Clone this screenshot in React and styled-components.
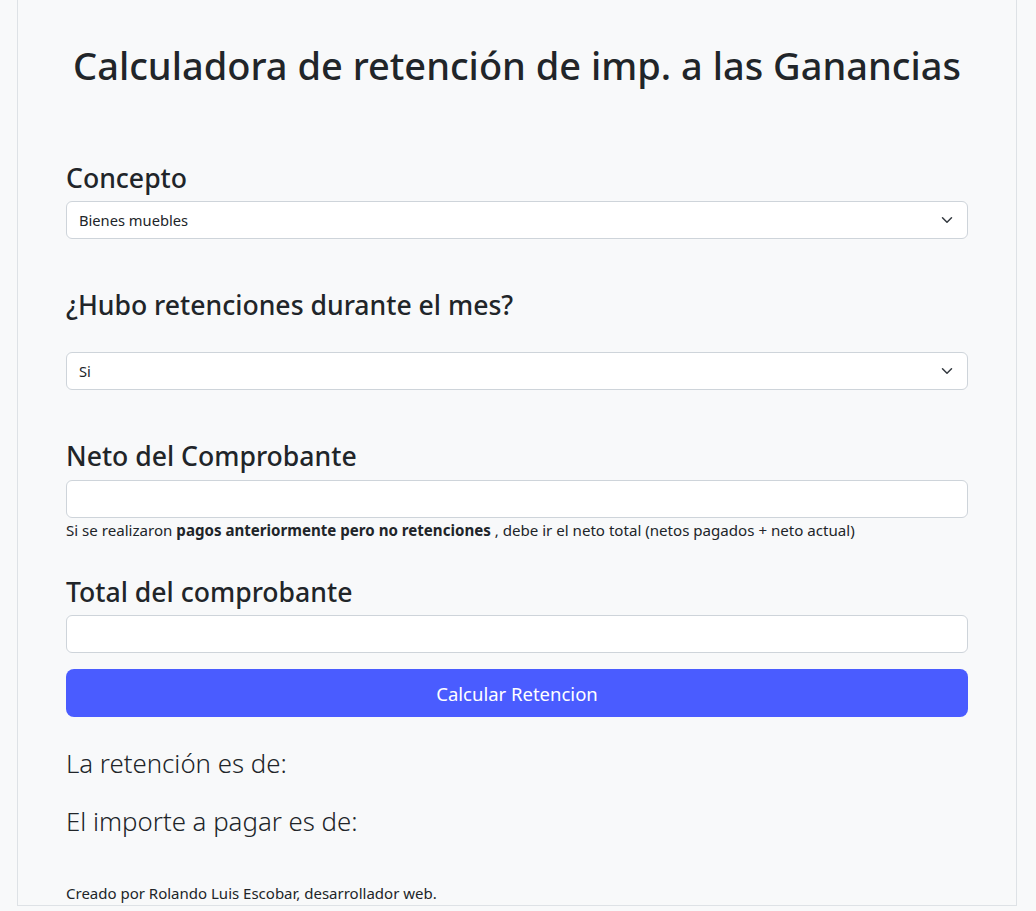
import React from "react";
import styled, { createGlobalStyle } from "styled-components";

const Global = createGlobalStyle`
  html, body { margin: 0; padding: 0; background: #f8f9fa; }
  body {
    font-family: "Noto Sans", "Open Sans", sans-serif;
    color: #212529;
  }
  * { box-sizing: border-box; }
`;

const Page = styled.div`
  width: 1000px;
  margin-left: 17px;
  border: 1px solid #dee2e6;
  border-top: none;
  background: #f8f9fa;
  padding: 41px 48px 0 48px;
  min-height: 906px;
`;

const Title = styled.h1`
  margin: 0;
  font-size: 38px;
  font-weight: 500;
  line-height: 48px;
  text-align: center;
  white-space: nowrap;
`;

const Label = styled.label`
  display: block;
  font-size: 26.6px;
  font-weight: 500;
  line-height: 34px;
  margin: ${(p) => p.$top}px 0 ${(p) => p.$bottom}px 0;
`;

const SelectBox = styled.div`
  position: relative;
  height: 38px;
  background: #fff;
  border: 1px solid #ced4da;
  border-radius: 6px;
  display: flex;
  align-items: center;
  padding: 0 36px 0 12px;
  font-size: 14.7px;
`;

const Chevron = styled.svg`
  position: absolute;
  right: 12px;
  top: 50%;
  transform: translateY(-50%);
  width: 16px;
  height: 12px;
`;

const Input = styled.input`
  display: block;
  width: 100%;
  height: 38px;
  background: #fff;
  border: 1px solid #ced4da;
  border-radius: 6px;
  padding: 0 12px;
  font-size: 14.7px;
  font-family: inherit;
  outline: none;
`;

const Help = styled.div`
  font-size: 15.1px;
  line-height: 21px;
  margin-top: 2px;
  white-space: nowrap;
  b { font-weight: 700; }
`;

const Button = styled.button`
  display: block;
  width: 100%;
  height: 48px;
  margin-top: 16px;
  background: #4a5cff;
  color: #fff;
  border: none;
  border-radius: 8px;
  font-family: inherit;
  font-size: 18.5px;
  cursor: pointer;
`;

const Result = styled.p`
  margin: ${(p) => p.$top}px 0 0 0;
  font-size: 25.8px;
  font-weight: 300;
  line-height: 34px;
`;

const Footer = styled.p`
  margin: 45px 0 0 0;
  font-size: 15px;
  line-height: 21px;
`;

function Select({ value }) {
  return (
    <SelectBox>
      {value}
      <Chevron viewBox="0 0 16 16">
        <path
          fill="none"
          stroke="#343a40"
          strokeLinecap="round"
          strokeLinejoin="round"
          strokeWidth="2"
          d="m2 5 6 6 6-6"
        />
      </Chevron>
    </SelectBox>
  );
}

export default function App() {
  return (
    <>
      <Global />
      <Page>
        <Title>Calculadora de retención de imp. a las Ganancias</Title>
        <Label $top={72} $bottom={6}>Concepto</Label>
        <Select value="Bienes muebles" />
        <Label $top={49} $bottom={30}>¿Hubo retenciones durante el mes?</Label>
        <Select value="Si" />
        <Label $top={49} $bottom={7}>Neto del Comprobante</Label>
        <Input type="text" />
        <Help>
          Si se realizaron <b>pagos anteriormente pero no retenciones</b> , debe ir el neto total (netos pagados + neto actual)
        </Help>
        <Label $top={34} $bottom={6}>Total del comprobante</Label>
        <Input type="text" />
        <Button>Calcular Retencion</Button>
        <Result $top={29}>La retención es de:</Result>
        <Result $top={24}>El importe a pagar es de:</Result>
        <Footer>Creado por Rolando Luis Escobar, desarrollador web.</Footer>
      </Page>
    </>
  );
}
